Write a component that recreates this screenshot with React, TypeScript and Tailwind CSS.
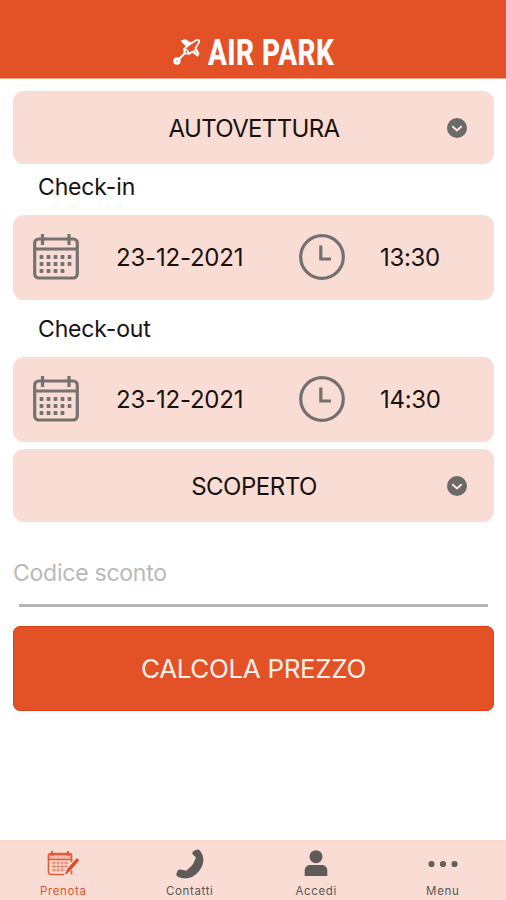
// ---------------------------------------------------------------------------
// App.tsx — Air Park booking form
// ---------------------------------------------------------------------------

import type { ReactNode } from 'react';

// ---- Icons ----------------------------------------------------------------

function PlaneIcon() {
  return (
    <svg viewBox="0 0 28 28" className="h-7 w-7 shrink-0" fill="none" stroke="#fff" strokeLinecap="round" strokeLinejoin="round">
      <path d="M10 3 13 2 19 5.500 24.500 2 27 2 27 4.500 23.500 10 26.500 15.500 25.500 17.500 20.500 13.500 17 16 15.500 12.500 12 11 15.500 8Z" strokeWidth="1.700" />
      <path d="M10 3 13 2 18.500 6.500 15.500 8.500Z" fill="#fff" strokeWidth="1" />
      <path d="M23 10.500 26.500 15.500 25.500 17.500 21 13Z" fill="#fff" fillOpacity=".7" stroke="none" />
      <path d="M12.500 11v4.500h4.500M12 16 7.500 20.500" strokeWidth="2" />
      <circle cx="5" cy="23" r="2.400" fill="#fff" fillOpacity=".6" strokeWidth="2.600" />
    </svg>
  );
}

const DOTS = [
  [8.5, 23], [15.5, 23], [22.5, 23], [29.5, 23], [36.5, 23],
  [8.5, 30], [15.5, 30], [22.5, 30], [29.5, 30], [36.5, 30],
  [8.5, 37], [15.5, 37], [22.5, 37], [29.5, 37],
];

function CalendarIcon() {
  return (
    <svg viewBox="0 0 46 46" className="h-[46px] w-[46px] shrink-0" fill="none" stroke="#757270">
      <rect x="1.700" y="5" width="42.600" height="39" rx="4" strokeWidth="3.200" />
      <path d="M2 15h42" strokeWidth="2.800" />
      <path d="M9.500 0v11M36 0v11" strokeWidth="3.200" />
      {DOTS.map(([x, y], i) => (
        <rect key={i} x={x - 1.9} y={y - 1.9} width="3.800" height="3.800" rx="0.600" fill="#757270" stroke="none" />
      ))}
    </svg>
  );
}

function ClockIcon() {
  return (
    <svg viewBox="0 0 46 46" className="h-[46px] w-[46px] shrink-0" fill="none" stroke="#73716f" strokeWidth="3.200">
      <circle cx="23" cy="23" r="21.300" />
      <path d="M21.800 11.500v13.500H32" />
    </svg>
  );
}

function ChevronIcon() {
  return (
    <svg viewBox="0 0 20 20" className="h-5 w-5" fill="none">
      <circle cx="10" cy="10" r="10" fill="#6b6a69" />
      <path d="m5.300 8.300 4.700 4.200 4.700-4.200" stroke="#fbe6e0" strokeWidth="2" />
    </svg>
  );
}

function BookIcon() {
  return (
    <svg viewBox="0 0 32 26" className="h-[26px] w-8" fill="none" stroke="#e75a35">
      <path d="M17 23.500H4A2.500 2.500 0 0 1 1.500 21V5A2.500 2.500 0 0 1 4 2.500h18A2.500 2.500 0 0 1 24.500 5v6M24.500 19.500v4" strokeWidth="1.600" />
      <path d="M1.500 3.500h23v5h-23z" fill="#e75a35" fillOpacity=".25" strokeWidth="1.300" />
      <path d="M5 0v5M21 0v5" strokeWidth="2" />
      <path d="M4 12h18M4 15.500h16M4 19h14M7 10v11M11 10v11M15 10v11M19 10v7" strokeWidth="1" strokeOpacity=".65" />
      <path d="m18.500 23 2.500-5.500L30 7.500l1.500 2L23 19.500Z" fill="#e24a20" stroke="#e24a20" strokeWidth="1" />
    </svg>
  );
}

function PhoneIcon() {
  return (
    <svg viewBox="0 0 28 30" className="h-[30px] w-7" fill="#5f5a58">
      <path d="M20.500.8c1.300-.6 2.600-.2 3.500 1 2.800 3.700 3.800 7.200 3.200 11.200-.9 6-5 11.300-10 14.200-4.500 2.500-9.700 2.800-15.200.5C.6 27-.1 25.500.6 24l1-2c.6-1.200 1.700-1.700 3-1.400l4.400.9c1 .2 1.900-.1 2.600-.8l1.200-1.400c3.200-2.300 5-4.800 6-8.300l.8-1.200c.3-.9.1-1.700-.6-2.400L17 5.800c-.8-.9-.9-1.800-.3-2.700.8-1.200 2.200-1.700 3.800-2.300Z" />
    </svg>
  );
}

function UserIcon() {
  return (
    <svg viewBox="0 0 24 27" className="h-[27px] w-6" fill="#5f5b59">
      <circle cx="12" cy="6.700" r="6.500" />
      <path d="M.7 26V20.500c0-3.500 2.500-5.500 6-5.500h10.600c3.500 0 6 2 6 5.500V26Z" />
    </svg>
  );
}

function MoreIcon() {
  return (
    <svg viewBox="0 0 30 8" className="h-2 w-[30px]" fill="#64605d">
      <circle cx="3.500" cy="4" r="3.100" />
      <circle cx="15" cy="4" r="3.100" />
      <circle cx="26.500" cy="4" r="3.100" />
    </svg>
  );
}

// ---- Form rows ------------------------------------------------------------

function SelectRow({ label, textClass }: { label: string; textClass: string }) {
  return (
    <button className="grid h-[73px] w-full grid-cols-[1fr_auto_1fr] items-center rounded-[11px] bg-[#f9dcd4] px-[27px]">
      <span />
      <span className={textClass}>{label}</span>
      <span className="flex justify-end">
        <ChevronIcon />
      </span>
    </button>
  );
}

function DateTimeRow({ date, time }: { date: string; time: string }) {
  return (
    <div className="flex h-[85px] items-center rounded-[11px] bg-[#f9dcd4] pb-px pl-5">
      <CalendarIcon />
      <span className="mt-px ml-[37px] w-[183px] tracking-[-0.2px]">{date}</span>
      <ClockIcon />
      <span className="mt-px ml-[35px] tracking-[-0.3px]">{time}</span>
    </div>
  );
}

// ---- Bottom tabs ----------------------------------------------------------

function Tab({ icon, label, active }: { icon: ReactNode; label: string; active?: boolean }) {
  return (
    <a className="flex flex-1 flex-col items-center">
      <span className="flex h-[43px] items-center justify-center">{icon}</span>
      <span
        className={
          active
            ? 'text-[11.500px] leading-[13px] tracking-[0.65px] text-[#e5532c]'
            : 'text-[11.500px] leading-[13px] tracking-[0.65px] text-[#5c5553]'
        }
      >
        {label}
      </span>
    </a>
  );
}

// ---- Page -----------------------------------------------------------------

export default function App() {
  return (
    <div className="flex h-[900px] w-[506px] flex-col overflow-hidden bg-white font-['Inter',sans-serif] text-[24px] leading-[28px] text-[#17110f]">
      <header className="flex h-[79px] shrink-0 items-start justify-center border-b border-[#f2a78f] bg-[#e35126] pt-[38px]">
        <div className="flex w-[162px] items-start">
          <PlaneIcon />
          <h1 className="ml-2 origin-left scale-x-[0.755] font-['Roboto',sans-serif] text-[37px] leading-[29px] font-extrabold tracking-[0.6px] whitespace-nowrap text-white">
            AIR PARK
          </h1>
        </div>
      </header>

      <main className="flex flex-1 flex-col pt-3 pr-[12px] pl-[13px]">
        <SelectRow label="AUTOVETTURA" textClass="pt-0.5 pl-px tracking-[-0.65px]" />
        <label className="flex h-[51px] items-center pb-1.5 pl-[25px] text-[23px] tracking-[-0.15px]">Check-in</label>
        <DateTimeRow date="23-12-2021" time="13:30" />
        <label className="flex h-[57px] items-center pl-[25px] text-[23px] tracking-[-0.15px]">Check-out</label>
        <DateTimeRow date="23-12-2021" time="14:30" />
        <div className="mt-[7px]">
          <SelectRow label="SCOPERTO" textClass="pt-0.5 pl-px tracking-[-0.5px]" />
        </div>
        <input
          placeholder="Codice sconto"
          className="mt-[31px] h-10 w-full text-[23px] tracking-[-0.25px] outline-none placeholder:text-[#b9b9b9]"
        />
        <hr className="mx-[6px] mt-[11px] border-t-[3px] border-[#b4b4b4]" />
        <button className="mt-[19px] h-[85px] rounded-[7px] border border-[#dc3f12] bg-[#e35126] text-[26px] tracking-[-0.35px] text-[#fff0eb]">
          CALCOLA PREZZO
        </button>
      </main>

      <nav className="flex h-[60px] shrink-0 border-t-2 border-[#f5d9cd] bg-[#f9dcd4]">
        <Tab icon={<BookIcon />} label="Prenota" active />
        <Tab icon={<PhoneIcon />} label="Contatti" />
        <Tab icon={<UserIcon />} label="Accedi" />
        <Tab icon={<MoreIcon />} label="Menu" />
      </nav>
    </div>
  );
}
